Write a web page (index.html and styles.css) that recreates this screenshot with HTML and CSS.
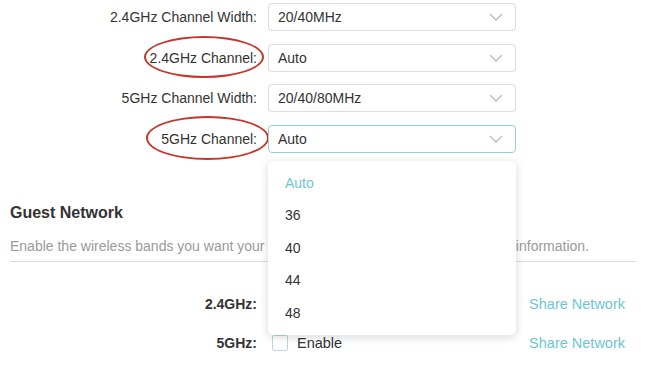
FILE: index.html
```html
<!DOCTYPE html>
<html lang="en">
<head>
  <meta charset="UTF-8" />
  <meta name="viewport" content="width=device-width, initial-scale=1.0" />
  <title>Wireless Settings</title>
  <link rel="stylesheet" href="styles.css">
</head>
<body>
  <div class="form">
    <div class="label">2.4GHz Channel Width:</div>
    <div class="select">
      <span>20/40MHz</span>
      <svg class="chevron" width="14" height="8" viewBox="0 0 14 8"><polyline points="1,1 7,7 13,1" /></svg>
    </div>

    <div class="label"><span class="mark mark-a">2.4GHz Channel:</span></div>
    <div class="select">
      <span>Auto</span>
      <svg class="chevron" width="14" height="8" viewBox="0 0 14 8"><polyline points="1,1 7,7 13,1" /></svg>
    </div>

    <div class="label">5GHz Channel Width:</div>
    <div class="select">
      <span>20/40/80MHz</span>
      <svg class="chevron" width="14" height="8" viewBox="0 0 14 8"><polyline points="1,1 7,7 13,1" /></svg>
    </div>

    <div class="label"><span class="mark mark-b">5GHz Channel:</span></div>
    <div class="select focused">
      <span>Auto</span>
      <svg class="chevron" width="14" height="8" viewBox="0 0 14 8"><polyline points="1,1 7,7 13,1" /></svg>
      <ul class="menu">
        <li class="active">Auto</li>
        <li>36</li>
        <li>40</li>
        <li>44</li>
        <li>48</li>
      </ul>
    </div>
  </div>

  <div class="guest">
    <h3>Guest Network</h3>
    <p class="desc">Enable the wireless bands you want your guests to use and share all the network information.</p>
    <div class="guest-rows">
      <div class="label bold">2.4GHz:</div>
      <div class="check"><span class="box"></span>Enable</div>
      <a class="share" href="#">Share Network</a>

      <div class="label bold">5GHz:</div>
      <div class="check"><span class="box"></span>Enable</div>
      <a class="share" href="#">Share Network</a>
    </div>
  </div>
</body>
</html>
```

FILE: styles.css
```css
body {
  font-family: "Liberation Sans", Arial, sans-serif;
  font-size: 14px;
  color: #333;
  background: #fff;
  margin: 0;
  padding: 0;
}

.form {
  display: grid;
  grid-template-columns: 257px 248px;
  grid-auto-rows: 28px;
  column-gap: 11px;
  row-gap: 12.67px;
  padding-top: 3px;
}

.label {
  display: flex;
  align-items: center;
  justify-content: flex-end;
}

.mark {
  position: relative;
}

.mark::after {
  content: "";
  position: absolute;
  top: 50%;
  border: 2.5px solid #c4362c;
  border-radius: 50%;
  transform: translateY(-50%);
}

.mark-a::after {
  left: -6px;
  right: -7px;
  height: 38px;
  margin-top: -1px;
}

.mark-b::after {
  left: -15px;
  right: -12px;
  height: 40px;
  margin-top: -1px;
}

.select {
  position: relative;
  display: flex;
  align-items: center;
  justify-content: space-between;
  border: 1px solid #dcdcdc;
  border-radius: 4px;
  padding: 0 12px 0 9px;
}

.select.focused {
  border-color: #8fd3d8;
}

.chevron polyline {
  fill: none;
  stroke: #c2c2c2;
  stroke-width: 1.6;
}

.menu {
  position: absolute;
  top: calc(100% + 9px);
  left: -1px;
  right: -1px;
  margin: 0;
  padding: 6px 0;
  list-style: none;
  background: #fff;
  border-radius: 6px;
  box-shadow: 0 2px 10px rgba(0, 0, 0, 0.16);
  z-index: 2;
}

.menu li {
  height: 32.4px;
  line-height: 32.4px;
  padding-left: 17px;
}

.menu li.active {
  color: #6cc6d2;
}

.guest {
  margin-top: 50px;
  padding: 0 14px 0 10px;
}

.guest h3 {
  margin: 0;
  font-size: 16px;
  line-height: 20px;
  color: #333;
}

.desc {
  margin: 13px 0 0;
  line-height: 20px;
  padding-bottom: 5px;
  color: #9a9a9a;
  white-space: nowrap;
  border-bottom: 1px solid #dcdcdc;
}

.guest-rows {
  display: grid;
  grid-template-columns: 247px 1fr auto;
  grid-auto-rows: 28px;
  column-gap: 11px;
  row-gap: 11px;
  margin-top: 28px;
  padding-right: 11px;
  font-size: 14.5px;
}

.bold {
  font-weight: bold;
  font-size: 14px;
}

.check {
  display: flex;
  align-items: center;
  padding-left: 4px;
}

.box {
  width: 14px;
  height: 14px;
  border: 1px solid #b9d6dc;
  border-radius: 2px;
  margin-right: 9px;
}

.share {
  display: flex;
  align-items: center;
  color: #6cc6d2;
  text-decoration: none;
}
```
